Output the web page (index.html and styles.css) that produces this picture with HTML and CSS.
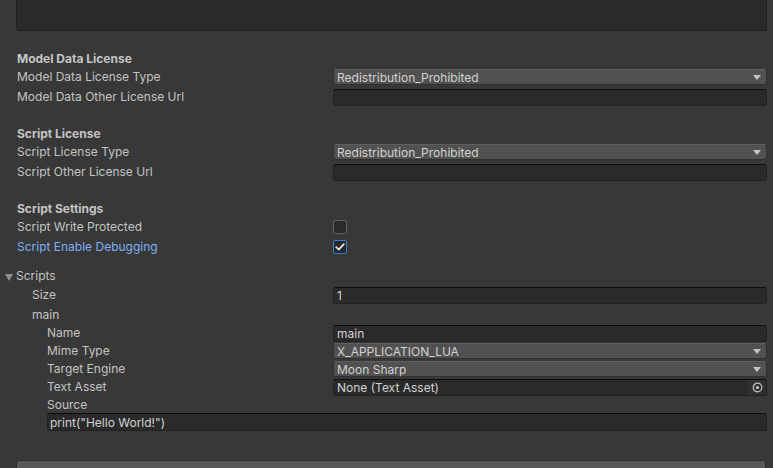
FILE: index.html
```html
<!DOCTYPE html>
<html>
<head>
<meta charset="utf-8">
<link rel="stylesheet" href="styles.css">
</head>
<body>
<div class="inspector">
  <div class="textarea"></div>

  <div class="section first">
    <div class="row header"><span class="label">Model Data License</span></div>
    <div class="row"><span class="label">Model Data License Type</span><div class="field dropdown"><span>Redistribution_Prohibited</span><i class="arrow"></i></div></div>
    <div class="row gap"><span class="label">Model Data Other License Url</span><div class="field text"></div></div>
  </div>

  <div class="section">
    <div class="row header"><span class="label">Script License</span></div>
    <div class="row"><span class="label">Script License Type</span><div class="field dropdown"><span>Redistribution_Prohibited</span><i class="arrow"></i></div></div>
    <div class="row gap"><span class="label">Script Other License Url</span><div class="field text"></div></div>
  </div>

  <div class="section">
    <div class="row header"><span class="label">Script Settings</span></div>
    <div class="row"><span class="label">Script Write Protected</span><div class="cbwrap"><span class="checkbox"></span></div></div>
    <div class="row gap"><span class="label blue">Script Enable Debugging</span><div class="cbwrap"><span class="checkbox checked"><svg width="10" height="8" viewBox="0 0 10 8"><path d="M1.2 4.2 L3.8 6.6 L8.8 1.2" fill="none" stroke="#e8e8e8" stroke-width="1.7" stroke-linecap="round" stroke-linejoin="round"/></svg></span></div></div>
  </div>

  <div class="scripts">
    <div class="row foldout"><span class="label"><i class="fold"></i>Scripts</span></div>
    <div class="row size"><span class="label ind1">Size</span><div class="field text"><span>1</span></div></div>
    <div class="row main"><span class="label ind1">main</span></div>
    <div class="row"><span class="label ind2">Name</span><div class="field text"><span>main</span></div></div>
    <div class="row"><span class="label ind2">Mime Type</span><div class="field dropdown"><span>X_APPLICATION_LUA</span><i class="arrow"></i></div></div>
    <div class="row"><span class="label ind2">Target Engine</span><div class="field dropdown"><span>Moon Sharp</span><i class="arrow"></i></div></div>
    <div class="row"><span class="label ind2">Text Asset</span><div class="field text object"><span>None (Text Asset)</span><i class="picker"><svg width="11" height="11" viewBox="0 0 11 11"><circle cx="5.5" cy="5.5" r="4.3" fill="none" stroke="#c4c4c4" stroke-width="1.2"/><circle cx="5.5" cy="5.5" r="1.6" fill="#c4c4c4"/></svg></i></div></div>
    <div class="row"><span class="label ind2">Source</span></div>
    <div class="source"><span>print("Hello World!")</span></div>
  </div>

  <div class="button"></div>
</div>
</body>
</html>
```

FILE: styles.css
```css
html, body {
  margin: 0;
  padding: 0;
  background: #383838;
  height: 100%;
  overflow: hidden;
}
body {
  font-family: Inter, "Noto Sans", sans-serif;
  font-size: 12px;
  color: #c4c4c4;
}
.inspector {
  padding: 0 6px 0 16px;
  display: flex;
  flex-direction: column;
}
.textarea {
  height: 30px;
  background: #2a2a2a;
  border: 1px solid #212121;
  border-top: none;
  border-radius: 0 0 3px 3px;
}
.section {
  display: flex;
  flex-direction: column;
  margin-top: 19px;
}
.row {
  display: flex;
  align-items: center;
  height: 18px;
}
.row.gap {
  margin-top: 2px;
}
.row.size {
  margin-top: 1px;
}
.row.main {
  margin-top: 2px;
}
.label {
  flex: 0 0 317px;
  box-sizing: border-box;
  padding-left: 1px;
  white-space: nowrap;
  line-height: 18px;
}
.header .label {
  font-weight: 700;
}
.label.blue {
  color: #7daff5;
}
.label.ind1 { padding-left: 16px; }
.label.ind2 { padding-left: 31px; }
.field {
  flex: 1;
  box-sizing: border-box;
  height: 17px;
  border-radius: 3px;
  display: flex;
  align-items: center;
  padding: 0 4px;
  white-space: nowrap;
  color: #d2d2d2;
}
.field.text {
  background: #2a2a2a;
  border: 1px solid #212121;
  border-top-color: #0d0d0d;
  padding: 0 3px;
}
.field.dropdown {
  height: 16px;
  background: #515151;
  border: 1px solid #303030;
  border-top-color: #5e5e5e;
  padding: 0 3px;
}
.field span { flex: 1; }
.arrow {
  width: 0;
  height: 0;
  border-left: 4px solid transparent;
  border-right: 4px solid transparent;
  border-top: 5px solid #c4c4c4;
  margin-right: 2px;
}
.field.object {
  padding-right: 0;
}
.picker {
  width: 18px;
  align-self: stretch;
  display: flex;
  align-items: center;
  justify-content: center;
  background: #303030;
  border-radius: 0 2px 2px 0;
}
.picker svg { display: block; }
.cbwrap {
  flex: 1;
  display: flex;
  align-items: center;
}
.checkbox {
  width: 14px;
  height: 14px;
  box-sizing: border-box;
  border: 1px solid #616161;
  background: #2a2a2a;
  border-radius: 2px;
  display: flex;
  align-items: center;
  justify-content: center;
  margin-top: -1px;
}
.checkbox.checked {
  border-color: #3a7ad0;
  background: #282828;
}
.checkbox svg { display: block; }
.scripts {
  display: flex;
  flex-direction: column;
  margin-top: 11px;
}
.fold {
  display: inline-block;
  width: 0;
  height: 0;
  border-left: 4px solid transparent;
  border-right: 4px solid transparent;
  border-top: 7px solid #8e8e8e;
  margin-left: -12px;
  margin-right: 3px;
  vertical-align: -1px;
}
.source {
  margin: -1px 0 0 31px;
  height: 18px;
  box-sizing: border-box;
  background: #2a2a2a;
  border: 1px solid #212121;
  border-top-color: #0d0d0d;
  border-radius: 3px;
  display: flex;
  align-items: center;
  padding: 0 2px;
  color: #d2d2d2;
}
.button {
  margin-top: 29px;
  height: 20px;
  background: #585858;
  border: 1px solid #2e2e2e;
  border-radius: 3px;
  margin-right: 1px;
}
```
